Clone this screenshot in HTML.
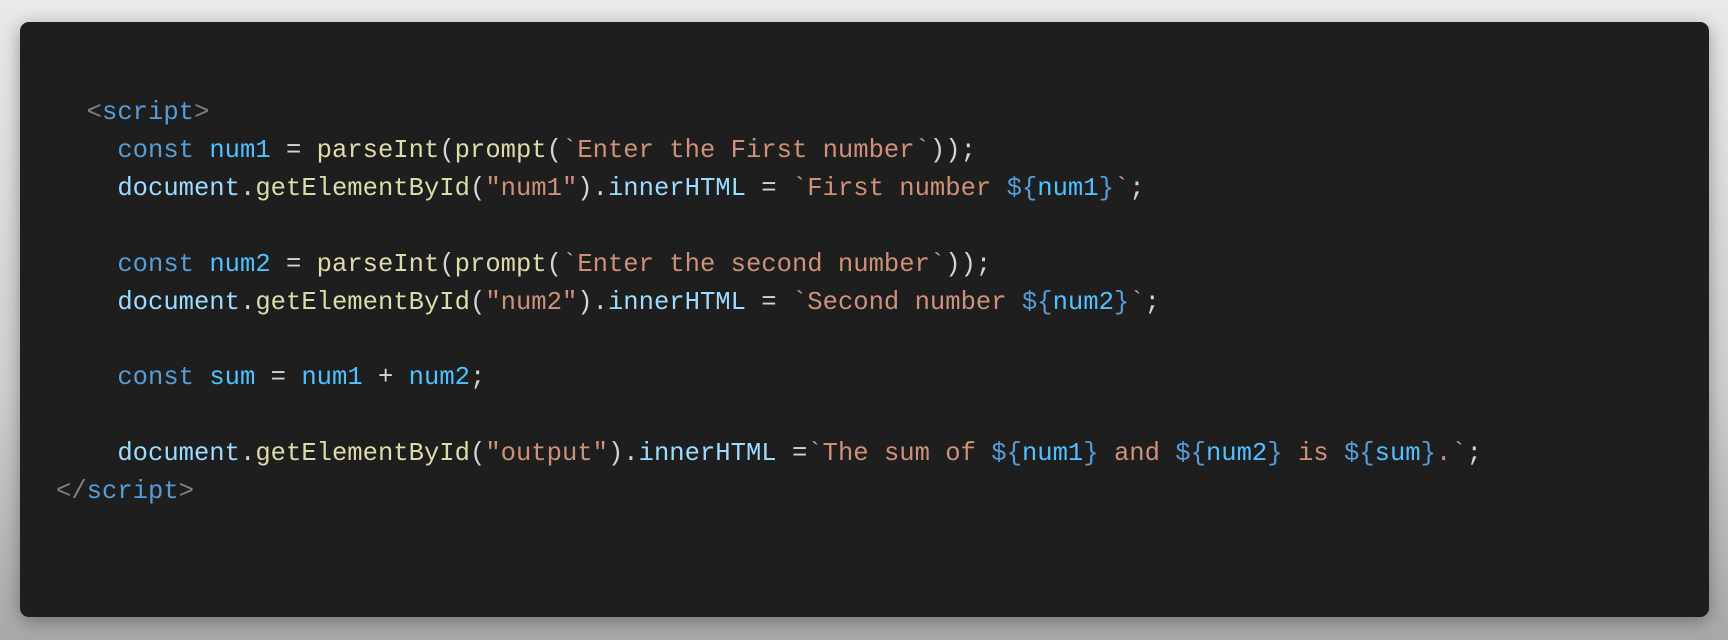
<!DOCTYPE html>
<html><head><meta charset="utf-8"><style>
html,body{margin:0;padding:0;width:1728px;height:640px;overflow:hidden;}
body{background:linear-gradient(180deg,#e9e9e9 0%,#cfcfcf 60%,#a8a8a8 100%);position:relative;}
.card{position:absolute;left:20px;top:22px;width:1689px;height:595px;background:#1e1e1e;border-radius:9px;box-shadow:0 4px 18px rgba(0,0,0,0.35);}
pre{position:absolute;left:36px;top:72px;margin:0;font-family:"Liberation Mono",monospace;font-size:25.55px;line-height:37.9px;color:#d4d4d4;white-space:pre;}
.t{color:#808080}.k{color:#569cd6}.v{color:#4fc1ff}.f{color:#dcdcaa}.s{color:#ce9178}.p{color:#9cdcfe}
</style></head><body>
<div class="card"><pre>  <span class="t">&lt;</span><span class="k">script</span><span class="t">&gt;</span>
    <span class="k">const</span> <span class="v">num1</span> = <span class="f">parseInt</span>(<span class="f">prompt</span>(<span class="s">`Enter the First number`</span>));
    <span class="p">document</span>.<span class="f">getElementById</span>(<span class="s">"num1"</span>).<span class="p">innerHTML</span> = <span class="s">`First number </span><span class="k">${</span><span class="v">num1</span><span class="k">}</span><span class="s">`</span>;

    <span class="k">const</span> <span class="v">num2</span> = <span class="f">parseInt</span>(<span class="f">prompt</span>(<span class="s">`Enter the second number`</span>));
    <span class="p">document</span>.<span class="f">getElementById</span>(<span class="s">"num2"</span>).<span class="p">innerHTML</span> = <span class="s">`Second number </span><span class="k">${</span><span class="v">num2</span><span class="k">}</span><span class="s">`</span>;

    <span class="k">const</span> <span class="v">sum</span> = <span class="v">num1</span> + <span class="v">num2</span>;

    <span class="p">document</span>.<span class="f">getElementById</span>(<span class="s">"output"</span>).<span class="p">innerHTML</span> =<span class="s">`The sum of </span><span class="k">${</span><span class="v">num1</span><span class="k">}</span><span class="s"> and </span><span class="k">${</span><span class="v">num2</span><span class="k">}</span><span class="s"> is </span><span class="k">${</span><span class="v">sum</span><span class="k">}</span><span class="s">.`</span>;
<span class="t">&lt;/</span><span class="k">script</span><span class="t">&gt;</span></pre></div>
</body></html>
